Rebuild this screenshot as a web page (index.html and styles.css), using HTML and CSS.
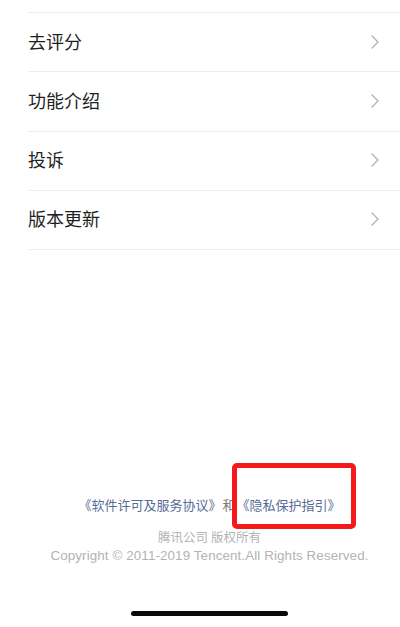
FILE: index.html
```html
<!DOCTYPE html>
<html lang="zh-CN">
<head>
<meta charset="utf-8">
<meta name="viewport" content="width=device-width, initial-scale=1">
<title>关于</title>
<link rel="stylesheet" href="styles.css">
</head>
<body>
<div class="page">
  <ul class="menu">
    <li class="menu-item"><span class="menu-label">去评分</span><svg class="chevron" viewBox="0 0 8 14" aria-hidden="true"><path d="M1 1 L7 7 L1 13" /></svg></li>
    <li class="menu-item"><span class="menu-label">功能介绍</span><svg class="chevron" viewBox="0 0 8 14" aria-hidden="true"><path d="M1 1 L7 7 L1 13" /></svg></li>
    <li class="menu-item"><span class="menu-label">投诉</span><svg class="chevron" viewBox="0 0 8 14" aria-hidden="true"><path d="M1 1 L7 7 L1 13" /></svg></li>
    <li class="menu-item"><span class="menu-label">版本更新</span><svg class="chevron" viewBox="0 0 8 14" aria-hidden="true"><path d="M1 1 L7 7 L1 13" /></svg></li>
  </ul>
  <footer class="footer">
    <p class="links"><a class="link">《软件许可及服务协议》</a><span class="and">和</span><a class="link">《隐私保护指引》</a></p>
    <p class="copy">腾讯公司 版权所有</p>
    <p class="copy copy-en">Copyright © 2011-2019 Tencent.All Rights Reserved.</p>
  </footer>
  <div class="home-indicator"></div>
</div>
<div class="annotation" aria-hidden="true"></div>
</body>
</html>
```
FILE: styles.css
```css
* { box-sizing: border-box; }
html, body {
  margin: 0;
  padding: 0;
  background: #ffffff;
}
body {
  font-family: "Noto Sans CJK SC", "Noto Sans", sans-serif;
  color: #1a1a1a;
  position: relative;
}
.page {
  min-height: 627px;
  display: flex;
  flex-direction: column;
}
.menu {
  list-style: none;
  margin: 0;
  padding: 12px 0 0 28px;
}
.menu-item {
  height: 59.25px;
  border-top: 1px solid #ececec;
  display: flex;
  align-items: center;
  justify-content: space-between;
  padding-right: 21px;
}
.menu-item:last-child {
  border-bottom: 1px solid #ececec;
  height: 60.25px;
}
.menu-label {
  font-size: 18px;
  line-height: 24px;
  color: #1f1f1f;
  margin-top: -3px;
}
.chevron {
  width: 8px;
  height: 14px;
  fill: none;
  stroke: #b4b4b4;
  stroke-width: 1.4;
  stroke-linecap: round;
  stroke-linejoin: round;
  margin-top: -1px;
}
.footer {
  margin-top: auto;
  text-align: center;
  padding-left: 19px;
}
.footer p { margin: 0; }
.links {
  font-size: 13px;
  line-height: 18px;
  margin-bottom: 14px !important;
}
.link {
  color: #576b95;
  text-decoration: none;
}
.and {
  color: #7a7a7a;
  margin: 0 1px;
}
.copy {
  font-size: 12.5px;
  line-height: 18.5px;
  color: #b3b3b3;
}
.copy-en {
  font-family: "Liberation Sans", "Noto Sans", sans-serif;
  font-size: 13.4px;
  letter-spacing: 0.1px;
}
.home-indicator {
  width: 157px;
  height: 5px;
  border-radius: 3px;
  background: #0a0a0a;
  margin: 46px 0 11px 131px;
}
.annotation {
  position: absolute;
  left: 232px;
  top: 463px;
  width: 124px;
  height: 66px;
  border: 5.5px solid #f5191b;
  border-radius: 5px;
}
```
